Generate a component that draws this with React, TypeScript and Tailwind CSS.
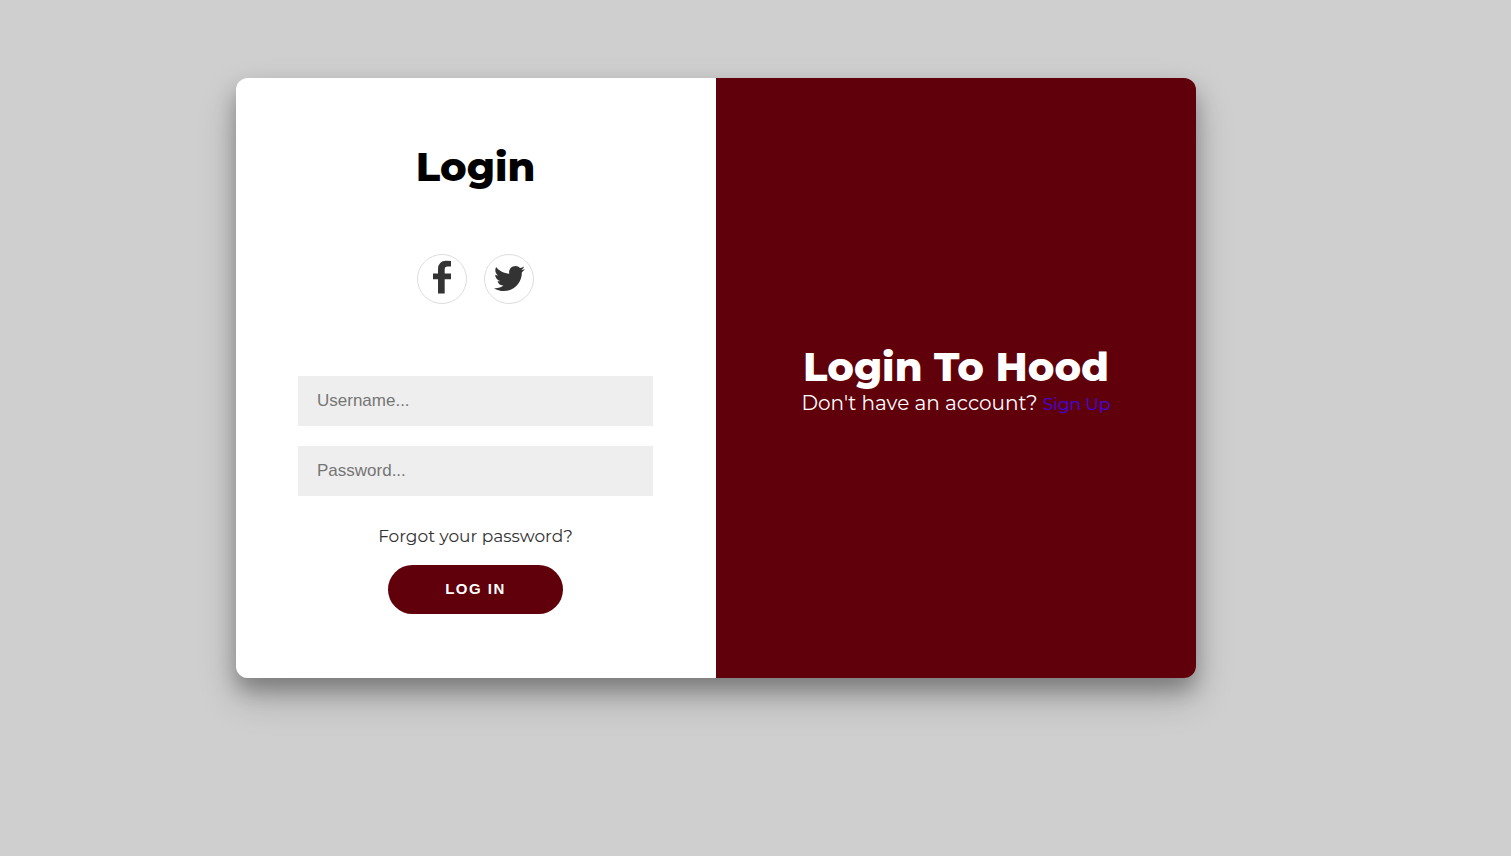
import type { ReactNode } from "react";
import { FaTwitter } from "react-icons/fa";

function FacebookIcon() {
  return (
    <svg viewBox="479 0 864 1728" width="18" height="36" fill="currentColor" aria-hidden="true">
      <path d="M1343 48v264h-157q-86 0-116 36t-30 108v189h303v278h-303v687h-320v-687h-241v-278h241v-218q0-186 104-288.5t277-102.5q161 0 242 12z" />
    </svg>
  );
}

function Social({ label, children }: { label: string; children: ReactNode }) {
  return (
    <a
      href="#"
      aria-label={label}
      className="flex size-[50px] items-center justify-center rounded-full border border-[#dddddd] pb-0.5 text-[#333333]"
    >
      {children}
    </a>
  );
}

const field =
  "h-[50px] w-full bg-[#eeeeee] px-[19px] font-['Liberation_Sans',sans-serif] text-[17px] text-black outline-none placeholder:text-[#757575]";

export default function App() {
  return (
    <div className="min-h-screen bg-[#cfcfcf] pt-[78px] pr-[79px] pb-10 font-['Montserrat',Inter,sans-serif]">
      <main className="mx-auto grid min-h-[600px] max-w-[960px] grid-cols-2 overflow-hidden rounded-xl shadow-[0_19px_38px_rgba(0,0,0,0.22),0_12px_20px_rgba(0,0,0,0.25)]">
        <form
          className="flex flex-col items-center bg-white pt-[64px] pr-[63px] pl-[62px]"
          onSubmit={(e) => e.preventDefault()}
        >
          <h1 className="text-[40px] leading-[50px] font-extrabold text-black">Login</h1>
          <div className="mt-[62px] flex gap-[17px]">
            <Social label="Facebook">
              <FacebookIcon />
            </Social>
            <Social label="Twitter">
              <FaTwitter size={31} />
            </Social>
          </div>
          <div className="mt-[72px] flex w-full flex-col gap-5">
            <input className={field} type="text" aria-label="Username" placeholder="Username..." />
            <input className={field} type="password" aria-label="Password" placeholder="Password..." />
          </div>
          <a href="#" className="mt-[28px] text-[17px] leading-6 text-[#333333]">
            Forgot your password?
          </a>
          <button
            type="submit"
            className="mt-[17px] h-[49px] w-[175px] rounded-full bg-[#5f000b] font-['Liberation_Sans',sans-serif] text-[15px] font-bold tracking-widest text-white"
          >
            LOG IN
          </button>
        </form>
        <section className="flex flex-col items-center justify-center bg-[#5f000b] pt-0.5 text-white">
          <h2 className="text-[40px] leading-12 font-extrabold">Login To Hood</h2>
          <p className="text-[20px] leading-6">
            Don't have an account?{" "}
            <a href="#" className="text-[17px] text-[#4400ee]">
              Sign Up
            </a>
          </p>
        </section>
      </main>
    </div>
  );
}
